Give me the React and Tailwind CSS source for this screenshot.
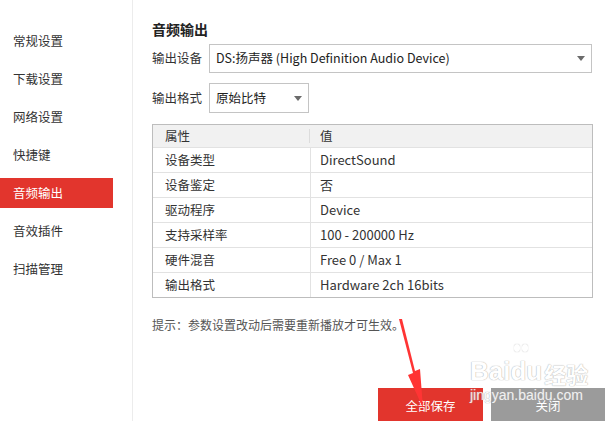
const menu = ['常规设置', '下载设置', '网络设置', '快捷键', '音频输出', '音效插件', '扫描管理'];

const rows = [
  ['设备类型', 'DirectSound'],
  ['设备鉴定', '否'],
  ['驱动程序', 'Device'],
  ['支持采样率', '100 - 200000 Hz'],
  ['硬件混音', 'Free 0 / Max 1'],
  ['输出格式', 'Hardware 2ch 16bits'],
];

function Caret() {
  return (
    <svg width="8" height="5" viewBox="0 0 8 5" className="shrink-0">
      <path d="M0 0h8L4 5z" fill="#6b6b6b" />
    </svg>
  );
}

export default function App() {
  return (
    <div className="relative flex w-[615px] h-[421px] overflow-hidden bg-white text-[#333] font-['Noto_Sans_CJK_SC','Noto_Sans',sans-serif]">
      {/* Sidebar */}
      <aside className="w-[133px] shrink-0 border-r border-[#ececec] pt-[26px] flex flex-col gap-[8px]">
        {menu.map((m) => (
          <div
            key={m}
            className={
              m === '音频输出'
                ? 'w-[113px] h-[30px] pl-[13px] flex items-center text-[12.5px] bg-[#e2352d] text-white'
                : 'w-[113px] h-[30px] pl-[13px] flex items-center text-[12.5px] text-[#333]'
            }
          >
            {m}
          </div>
        ))}
      </aside>

      {/* Main */}
      <main className="flex-1 flex flex-col pl-[19px] pt-[19px]">
        <h2 className="h-[20px] leading-[20px] text-[14px] font-bold text-[#222]">音频输出</h2>

        <div className="mt-[5px] flex items-center w-[440px]">
          <span className="w-[57px] text-[12.5px]">输出设备</span>
          <div className="flex-1 h-[29px] border border-[#c4c4c4] flex items-center justify-between pl-[6px] pr-[6px] text-[12.5px] text-[#222]">
            <span>DS:扬声器 (High Definition Audio Device)</span>
            <Caret />
          </div>
        </div>

        <div className="mt-[10px] flex items-center">
          <span className="w-[57px] text-[12.5px]">输出格式</span>
          <div className="w-[100px] h-[30px] border border-[#c4c4c4] flex items-center justify-between pl-[6px] pr-[6px] text-[12.5px] text-[#222]">
            <span>原始比特</span>
            <Caret />
          </div>
        </div>

        <div className="mt-[11px] w-[441px] border border-[#bdbdbd] text-[12.5px]">
          <div className="flex h-[22px] bg-[#f1f1f1] items-center">
            <div className="w-[157px] pl-[12px] border-r border-[#dcdcdc] h-[14px] flex items-center">属性</div>
            <div className="pl-[10px]">值</div>
          </div>
          {rows.map(([k, v]) => (
            <div key={k} className="flex h-[25px] border-t border-[#e2e2e2]">
              <div className="w-[158px] pl-[12px] border-r border-[#e2e2e2] flex items-center">{k}</div>
              <div className="pl-[9px] flex items-center text-[13px]">{v}</div>
            </div>
          ))}
        </div>

        <p className="mt-[18px] text-[12px] leading-[18px] text-[#555]">提示：参数设置改动后需要重新播放才可生效。</p>

        <div className="mt-auto flex justify-end gap-[8px] pr-[10px] translate-y-[3px]">
          <button className="w-[105px] h-[36px] bg-[#e2352d] text-white text-[12.5px]">全部保存</button>
          <button className="w-[114px] h-[36px] bg-[#9b9b9b] text-white text-[12.5px]">关闭</button>
        </div>
      </main>

      {/* Annotation arrow */}
      <svg className="absolute left-0 top-0 pointer-events-none" width="615" height="421">
        <path d="M399 319 L402 319 L415 371 L420 369 L423 408 L408 375 L413 373 Z" fill="#ff3434" />
      </svg>

      {/* Watermark */}
      <div className="absolute left-[470px] top-[356px] pointer-events-none text-white [text-shadow:0_0_1px_#aaa,0_0_1px_#aaa] font-['Liberation_Sans',sans-serif] opacity-85">
        <div className="flex items-end h-[28px] text-[26px] leading-none font-bold">
          <span>Bai</span>
          <span className="relative">
            du
            <span className="absolute left-[4px] -top-[14px] flex gap-[2px]">
              <span className="w-[6px] h-[8px] rounded-full bg-white shadow-[0_0_1px_#aaa]" />
              <span className="w-[6px] h-[8px] rounded-full bg-white shadow-[0_0_1px_#aaa]" />
            </span>
          </span>
          <span className="ml-[2px] text-[22px] font-['Noto_Sans_CJK_SC',sans-serif]">经验</span>
        </div>
        <div className="mt-[4px] text-[14px] leading-none">jingyan.baidu.com</div>
      </div>
    </div>
  );
}
